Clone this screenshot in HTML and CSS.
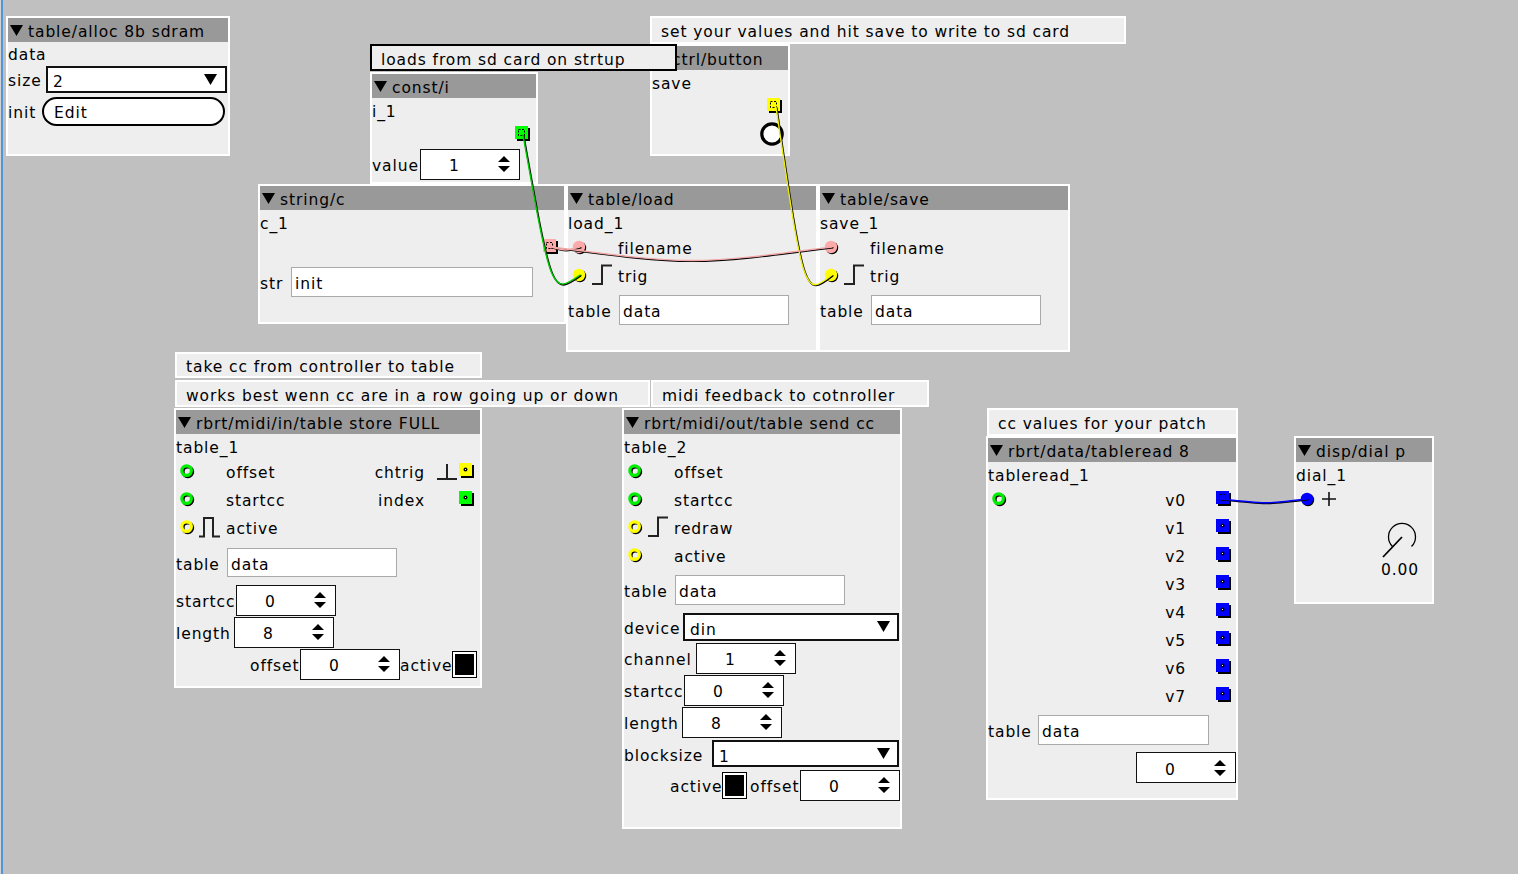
FILE: index.html
```html
<!DOCTYPE html>
<html lang="en">
<head>
<meta charset="utf-8">
<title>patch</title>
<link rel="stylesheet" href="styles.css">
</head>
<body>
<div class="canvas">
<div class="edge"></div>
<svg class="defs" width="0" height="0" aria-hidden="true">
<defs>
<symbol id="tri" viewBox="0 0 13 11"><path d="M0 0H13L6.5 11Z" fill="#000"/></symbol>
<symbol id="ring-g" viewBox="0 0 15 15"><circle cx="7.8" cy="7.8" r="4.8" fill="none" stroke="#000" stroke-width="3.2"/><circle cx="6.6" cy="6.6" r="4.8" fill="none" stroke="#00ee00" stroke-width="3.2"/></symbol>
<symbol id="ring-y" viewBox="0 0 15 15"><circle cx="7.8" cy="7.8" r="4.8" fill="none" stroke="#000" stroke-width="3.2"/><circle cx="6.6" cy="6.6" r="4.8" fill="none" stroke="#ffff00" stroke-width="3.2"/></symbol>
<symbol id="fill-p" viewBox="0 0 15 15"><circle cx="8" cy="8" r="6.2" fill="#000"/><circle cx="7" cy="7" r="6.2" fill="#ffaaaa"/></symbol>
<symbol id="fill-y" viewBox="0 0 15 15"><circle cx="8" cy="8" r="6.2" fill="#000"/><circle cx="7" cy="7" r="6.2" fill="#ffff00"/></symbol>
<symbol id="fill-b" viewBox="0 0 15 15"><circle cx="8" cy="8" r="6.2" fill="#000"/><circle cx="7" cy="7" r="6.2" fill="#0000ff"/></symbol>
<symbol id="out-y" viewBox="0 0 16 16"><rect x="2" y="2" width="13" height="13" fill="#000"/><rect width="13" height="13" fill="#ffff00"/><circle cx="6.5" cy="6.5" r="2" fill="#000"/><rect x="6" y="6" width="1" height="1" fill="#fff"/></symbol>
<symbol id="out-g" viewBox="0 0 16 16"><rect x="2" y="2" width="13" height="13" fill="#000"/><rect width="13" height="13" fill="#00ff00"/><circle cx="6.5" cy="6.5" r="2" fill="#000"/><rect x="6" y="6" width="1" height="1" fill="#fff"/></symbol>
<symbol id="out-b" viewBox="0 0 16 16"><rect x="2" y="2" width="13" height="13" fill="#000"/><rect width="13" height="13" fill="#0000ff"/><circle cx="6.5" cy="6.5" r="2" fill="#000"/><rect x="6" y="6" width="1" height="1" fill="#fff"/></symbol>
<symbol id="outc-g" viewBox="0 0 16 16"><rect x="2" y="2" width="13" height="13" fill="#000"/><rect width="13" height="13" fill="#00ff00"/><rect x="3.5" y="3.5" width="6" height="6" fill="none" stroke="#000" stroke-dasharray="2 1.5"/></symbol>
<symbol id="outc-y" viewBox="0 0 16 16"><rect x="2" y="2" width="13" height="13" fill="#000"/><rect width="13" height="13" fill="#ffff00"/><rect x="3.5" y="3.5" width="6" height="6" fill="none" stroke="#000" stroke-dasharray="2 1.5"/></symbol>
<symbol id="outc-p" viewBox="0 0 16 16"><rect x="2" y="2" width="13" height="13" fill="#000"/><rect width="13" height="13" fill="#ffaaaa"/><rect x="3.5" y="3.5" width="6" height="6" fill="none" stroke="#000" stroke-dasharray="2 1.5"/></symbol>
<symbol id="outc-b" viewBox="0 0 16 16"><rect x="2" y="2" width="13" height="13" fill="#000"/><rect width="13" height="13" fill="#0000ff"/><rect x="3.5" y="3.5" width="6" height="6" fill="none" stroke="#000" stroke-dasharray="2 1.5"/></symbol>
<symbol id="step" viewBox="0 0 22 22"><path d="M1 20H11V1.5H21" fill="none" stroke="#222" stroke-width="2"/></symbol>
<symbol id="pulse" viewBox="0 0 22 22"><path d="M0 20.5H5V2H14V20.5H21" fill="none" stroke="#222" stroke-width="2"/></symbol>
<symbol id="fall" viewBox="0 0 22 22"><path d="M11 4V19M1 19H21" fill="none" stroke="#222" stroke-width="2"/></symbol>
<symbol id="arr" viewBox="0 0 12 16"><path d="M0 6L6 0L12 6ZM0 10H12L6 16Z" fill="#000"/></symbol>
<symbol id="dda" viewBox="0 0 13 11"><path d="M0 0H13L6.5 11Z" fill="#000"/></symbol>
</defs>
</svg>

<div class="obj p-alloc">
  <div class="hdr"><svg class="tri"><use href="#tri"/></svg><span>table/alloc 8b sdram</span></div>
  <div class="name h22">data</div>
  <div class="row h30"><span class="lbl w38">size</span><div class="dd w181 h27"><span>2</span><svg class="dda r10"><use href="#dda"/></svg></div></div>
  <div class="row h34"><span class="lbl w34">init</span><div class="btn">Edit</div></div>
</div>

<div class="cmt c-set">set your values and hit save to write to sd card</div>

<div class="obj p-button">
  <div class="hdr"><svg class="tri"><use href="#tri"/></svg><span>ctrl/button</span></div>
  <div class="name h23">save</div>
  <div class="row h26 end"><svg class="out mr5"><use href="#outc-y"/></svg></div>
  <div class="row h30 end"><svg class="pushbtn" viewBox="0 0 24 24"><circle cx="12" cy="12" r="10.2" fill="#fff" stroke="#000" stroke-width="3.2"/></svg></div>
</div>

<div class="obj p-consti">
  <div class="hdr"><svg class="tri"><use href="#tri"/></svg><span>const/i</span></div>
  <div class="name h24">i_1</div>
  <div class="row h24 end"><svg class="out mr5"><use href="#outc-g"/></svg></div>
  <div class="row h36"><span class="lbl w48">value</span><div class="spin"><span class="sv">1</span><svg class="arr"><use href="#arr"/></svg></div></div>
</div>

<div class="cmt sel c-loads">loads from sd card on strtup</div>

<div class="obj p-strc">
  <div class="hdr"><svg class="tri"><use href="#tri"/></svg><span>string/c</span></div>
  <div class="name h23">c_1</div>
  <div class="row h28 end"><svg class="out mr5"><use href="#outc-p"/></svg></div>
  <div class="row h42"><span class="lbl w31">str</span><div class="field w242">init</div></div>
</div>

<div class="obj p-load">
  <div class="hdr"><svg class="tri"><use href="#tri"/></svg><span>table/load</span></div>
  <div class="name h23">load_1</div>
  <div class="row h28"><div class="io"><svg class="inf"><use href="#fill-p"/></svg></div><span>filename</span></div>
  <div class="row h28"><div class="io"><svg class="inf"><use href="#fill-y"/></svg><svg class="sym"><use href="#step"/></svg></div><span>trig</span></div>
  <div class="row h41"><span class="lbl w51">table</span><div class="field w170">data</div></div>
</div>

<div class="obj p-save">
  <div class="hdr"><svg class="tri"><use href="#tri"/></svg><span>table/save</span></div>
  <div class="name h23">save_1</div>
  <div class="row h28"><div class="io"><svg class="inf"><use href="#fill-p"/></svg></div><span>filename</span></div>
  <div class="row h28"><div class="io"><svg class="inf"><use href="#fill-y"/></svg><svg class="sym"><use href="#step"/></svg></div><span>trig</span></div>
  <div class="row h41"><span class="lbl w51">table</span><div class="field w170">data</div></div>
</div>

<div class="cmt c-take">take cc from controller to table</div>
<div class="cmt c-works">works best wenn cc are in a row going up or down</div>
<div class="cmt c-midi">midi feedback to cotnroller</div>

<div class="obj p-midiin">
  <div class="hdr"><svg class="tri"><use href="#tri"/></svg><span>rbrt/midi/in/table store FULL</span></div>
  <div class="name h23">table_1</div>
  <div class="row h28"><div class="io"><svg class="inr"><use href="#ring-g"/></svg></div><span>offset</span>
    <div class="rgrp"><span class="rl">chtrig</span><svg class="sym"><use href="#fall"/></svg><svg class="out ml1 mr5"><use href="#out-y"/></svg></div></div>
  <div class="row h28"><div class="io"><svg class="inr"><use href="#ring-g"/></svg></div><span>startcc</span>
    <div class="rgrp"><span class="rl">index</span><i class="sym"></i><svg class="out ml1 mr5"><use href="#out-g"/></svg></div></div>
  <div class="row h28"><div class="io"><svg class="inr"><use href="#ring-y"/></svg><svg class="sym"><use href="#pulse"/></svg></div><span>active</span></div>
  <div class="row h43"><span class="lbl w51">table</span><div class="field w170 h29">data</div></div>
  <div class="row h32"><span class="lbl w60">startcc</span><div class="spin"><span class="sv">0</span><svg class="arr"><use href="#arr"/></svg></div></div>
  <div class="row h32"><span class="lbl w58">length</span><div class="spin"><span class="sv">8</span><svg class="arr"><use href="#arr"/></svg></div></div>
  <div class="row h32"><span class="lbl w50 ml74">offset</span><div class="spin"><span class="sv">0</span><svg class="arr"><use href="#arr"/></svg></div><span class="lbl w52">active</span><div class="chk"></div></div>
</div>

<div class="obj p-midiout">
  <div class="hdr"><svg class="tri"><use href="#tri"/></svg><span>rbrt/midi/out/table send cc</span></div>
  <div class="name h23">table_2</div>
  <div class="row h28"><div class="io"><svg class="inr"><use href="#ring-g"/></svg></div><span>offset</span></div>
  <div class="row h28"><div class="io"><svg class="inr"><use href="#ring-g"/></svg></div><span>startcc</span></div>
  <div class="row h28"><div class="io"><svg class="inr"><use href="#ring-y"/></svg><svg class="sym"><use href="#step"/></svg></div><span>redraw</span></div>
  <div class="row h28"><div class="io"><svg class="inr"><use href="#ring-y"/></svg></div><span>active</span></div>
  <div class="row h42"><span class="lbl w51">table</span><div class="field w170">data</div></div>
  <div class="row h31"><span class="lbl w59">device</span><div class="dd w216 h28"><span>din</span><svg class="dda r9"><use href="#dda"/></svg></div></div>
  <div class="row h32"><span class="lbl w72">channel</span><div class="spin"><span class="sv">1</span><svg class="arr"><use href="#arr"/></svg></div></div>
  <div class="row h32"><span class="lbl w60">startcc</span><div class="spin"><span class="sv">0</span><svg class="arr"><use href="#arr"/></svg></div></div>
  <div class="row h32"><span class="lbl w58">length</span><div class="spin"><span class="sv">8</span><svg class="arr"><use href="#arr"/></svg></div></div>
  <div class="row h31"><span class="lbl w88">blocksize</span><div class="dd w187 h27"><span>1</span><svg class="dda r9"><use href="#dda"/></svg></div></div>
  <div class="row h32"><span class="lbl w52 ml46">active</span><div class="chk"></div><span class="lbl w53 pl3">offset</span><div class="spin"><span class="sv">0</span><svg class="arr"><use href="#arr"/></svg></div></div>
</div>

<div class="cmt c-ccv">cc values for your patch</div>

<div class="obj p-tread">
  <div class="hdr"><svg class="tri"><use href="#tri"/></svg><span>rbrt/data/tableread 8</span></div>
  <div class="name h23">tableread_1</div>
  <div class="row h28"><div class="io"><svg class="inr"><use href="#ring-g"/></svg></div><span class="vl">v0</span><svg class="out ml30 mr4"><use href="#outc-b"/></svg></div>
  <div class="row h28"><span class="vl">v1</span><svg class="out ml30 mr4"><use href="#out-b"/></svg></div>
  <div class="row h28"><span class="vl">v2</span><svg class="out ml30 mr4"><use href="#out-b"/></svg></div>
  <div class="row h28"><span class="vl">v3</span><svg class="out ml30 mr4"><use href="#out-b"/></svg></div>
  <div class="row h28"><span class="vl">v4</span><svg class="out ml30 mr4"><use href="#out-b"/></svg></div>
  <div class="row h28"><span class="vl">v5</span><svg class="out ml30 mr4"><use href="#out-b"/></svg></div>
  <div class="row h28"><span class="vl">v6</span><svg class="out ml30 mr4"><use href="#out-b"/></svg></div>
  <div class="row h28"><span class="vl">v7</span><svg class="out ml30 mr4"><use href="#out-b"/></svg></div>
  <div class="row h42"><span class="lbl w50">table</span><div class="field w171">data</div></div>
  <div class="row h33"><div class="spin ml148"><span class="sv">0</span><svg class="arr"><use href="#arr"/></svg></div></div>
</div>

<div class="obj p-dial">
  <div class="hdr"><svg class="tri"><use href="#tri"/></svg><span>disp/dial p</span></div>
  <div class="name h23">dial_1</div>
  <div class="row h28"><div class="io"><svg class="inf"><use href="#fill-b"/></svg><svg class="plus" viewBox="0 0 14 14"><path d="M0 7H14M7 0V14" stroke="#111" stroke-width="1.6"/></svg></div></div>
  <div class="dialcol">
    <svg class="knob" viewBox="0 0 44 46"><path d="M14.5 33.5A13.5 13.5 0 1 1 33.5 33.5" fill="none" stroke="#000" stroke-width="1.3"/><path d="M24 24L5 44" stroke="#000" stroke-width="1.8"/></svg>
    <span class="dv">0.00</span>
  </div>
</div>

<svg class="wires" width="1518" height="874" viewBox="0 0 1518 874">
  <g fill="none" stroke-linecap="round">
    <g stroke="#000" stroke-width="1.6" transform="translate(0.8 0.8)">
      <path d="M523 135C551.5 295 551.5 295 580 275"/>
      <path d="M776 107C804 297 804 297 832 275"/>
      <path d="M551 247C565.5 251 565.5 251 580 247"/>
      <path d="M551 247C691.5 265 691.5 265 832 247"/>
      <path d="M1223 499C1265 504 1265 504 1307 499"/>
    </g>
    <path d="M523 135C551.5 295 551.5 295 580 275" stroke="#00d000" stroke-width="1.4"/>
    <path d="M776 107C804 297 804 297 832 275" stroke="#f0f000" stroke-width="1.4"/>
    <path d="M551 247C565.5 251 565.5 251 580 247" stroke="#f2a6a6" stroke-width="1.4"/>
    <path d="M551 247C691.5 265 691.5 265 832 247" stroke="#f2a6a6" stroke-width="1.4"/>
    <path d="M1223 499C1265 504 1265 504 1307 499" stroke="#0000ff" stroke-width="1.4"/>
  </g>
</svg>
</div>
</body>
</html>
```

FILE: styles.css
```css
* { box-sizing: border-box; }
html, body { margin: 0; padding: 0; }
body {
  background: #c0c0c0;
  font-family: "DejaVu Sans", "Liberation Sans", sans-serif;
  font-size: 15.5px;
  letter-spacing: 0.9px;
  color: #000;
}
.canvas { position: relative; width: 1518px; height: 874px; overflow: hidden; background: #c0c0c0; }
.edge { position: absolute; left: 0; top: 0; width: 3px; height: 874px; border-left: 1px solid #d2d2d2; background: #5196dc; }
.defs { position: absolute; width: 0; height: 0; overflow: hidden; }
.wires { position: absolute; left: 0; top: 0; pointer-events: none; }

.obj {
  position: absolute;
  border: 2px solid #fff;
  background: #eee;
  display: flex;
  flex-direction: column;
  white-space: nowrap;
  overflow: hidden;
}
.cmt {
  position: absolute;
  border: 2px solid #fff;
  background: #eee;
  padding: 4px 0 0 9px;
  display: flex;
  align-items: center;
  white-space: nowrap;
}
.cmt.sel { border-color: #000; }

.hdr {
  flex: none;
  height: 24px;
  background: #999;
  display: flex;
  align-items: center;
  overflow: hidden;
}
.hdr span { padding-top: 4px; }
.tri { flex: none; width: 13px; height: 11px; margin-left: 2px; margin-right: 5px; }
.name { flex: none; display: flex; align-items: center; padding-top: 4px; }
.row { flex: none; display: flex; align-items: center; }
.row > span, .rl, .sv, .dd > span { padding-top: 4px; }
.end { justify-content: flex-end; }

.h22 { height: 22px; } .h23 { height: 23px; } .h24 { height: 24px; } .h26 { height: 26px; }
.h28 { height: 28px; } .h30 { height: 30px; } .h31 { height: 31px; } .h32 { height: 32px; }
.h33 { height: 33px; } .h34 { height: 34px; } .h36 { height: 36px; } .h41 { height: 41px; }
.h42 { height: 42px; } .h43 { height: 43px; }

.lbl { flex: none; }
.w31 { width: 31px; } .w34 { width: 34px; } .w38 { width: 38px; } .w48 { width: 48px; }
.w50 { width: 50px; } .w51 { width: 51px; } .w52 { width: 52px; } .w53 { width: 53px; }
.w58 { width: 58px; } .w59 { width: 59px; } .w60 { width: 60px; } .w72 { width: 72px; }
.w88 { width: 88px; }
.ml1 { margin-left: 1px; } .ml30 { margin-left: 30px; }
.ml46 { margin-left: 46px; } .ml74 { margin-left: 74px; } .ml148 { margin-left: 148px; }
.mr4 { margin-right: 4px; } .mr5 { margin-right: 5px; } .pl3 { padding-left: 3px; }

/* object positions on the patch canvas */
.p-alloc { left: 6px; top: 16px; width: 224px; height: 140px; }
.p-button { left: 650px; top: 44px; width: 140px; height: 112px; }
.p-consti { left: 370px; top: 72px; width: 168px; height: 112px; }
.p-strc { left: 258px; top: 184px; width: 308px; height: 140px; }
.p-load { left: 566px; top: 184px; width: 252px; height: 168px; }
.p-save { left: 818px; top: 184px; width: 252px; height: 168px; }
.p-midiin { left: 174px; top: 408px; width: 308px; height: 280px; }
.p-midiout { left: 622px; top: 408px; width: 280px; height: 421px; }
.p-tread { left: 986px; top: 436px; width: 252px; height: 364px; }
.p-dial { left: 1294px; top: 436px; width: 140px; height: 168px; }

.c-set { left: 650px; top: 16px; width: 476px; height: 28px; }
.c-loads { left: 370px; top: 44px; width: 307px; height: 27px; }
.c-take { left: 175px; top: 352px; width: 307px; height: 26px; }
.c-works { left: 175px; top: 380px; width: 475px; height: 27px; }
.c-midi { left: 651px; top: 380px; width: 278px; height: 27px; }
.c-ccv { left: 987px; top: 408px; width: 251px; height: 28px; }

/* widgets */
.dd {
  flex: none;
  display: flex;
  align-items: center;
  background: #fff;
  border: 2px solid #111;
  padding: 2px 0 0 5px;
}
.w181 { width: 181px; } .w216 { width: 216px; } .w187 { width: 187px; }
.h27 { height: 27px; } .h28 { height: 28px; } .h29 { height: 29px; }
.dda { width: 13px; height: 11px; margin-left: auto; margin-top: -2px; }
.r10 { margin-right: 8px; }
.r9 { margin-right: 7px; }

.btn {
  flex: none;
  width: 183px;
  height: 29px;
  border: 2px solid #000;
  border-radius: 15px;
  background: #fff;
  padding: 4px 0 0 10px;
  display: flex;
  align-items: center;
}

.spin {
  flex: none;
  width: 100px;
  height: 31px;
  background: #fff;
  border: 1px solid #111;
  display: flex;
  align-items: center;
}
.sv { width: 67px; text-align: center; }
.arr { width: 12px; height: 16px; margin-left: auto; margin-right: 9px; }

.field {
  flex: none;
  height: 30px;
  background: #fff;
  border: 1px solid #aaa;
  padding: 4px 0 0 3px;
  display: flex;
  align-items: center;
}
.field.h29 { height: 29px; }
.w170 { width: 170px; } .w171 { width: 171px; } .w242 { width: 242px; }

.chk {
  flex: none;
  width: 25px;
  height: 27px;
  border: 1px solid #000;
  background: #000;
  box-shadow: inset 0 0 0 2px #fff;
}

.pushbtn { width: 24px; height: 24px; margin-right: 4px; }

.io { flex: none; width: 50px; display: flex; align-items: center; }
.inr { width: 15px; height: 15px; margin-left: 4px; }
.inf { width: 15px; height: 15px; margin-left: 4px; }
.sym { flex: none; width: 22px; height: 22px; margin-left: 4px; display: block; }
.rgrp { margin-left: auto; display: flex; align-items: center; }
.rl { text-align: right; }
.rgrp .sym { margin-left: 11px; }
.out { flex: none; width: 16px; height: 16px; }
.vl { margin-left: auto; }

.plus { width: 14px; height: 14px; margin-left: 7px; }
.dialcol { display: flex; flex-direction: column; align-items: center; width: 44px; margin-left: 82px; }
.knob { width: 44px; height: 46px; display: block; }
.dv { line-height: 18px; padding-top: 2px; }
```
